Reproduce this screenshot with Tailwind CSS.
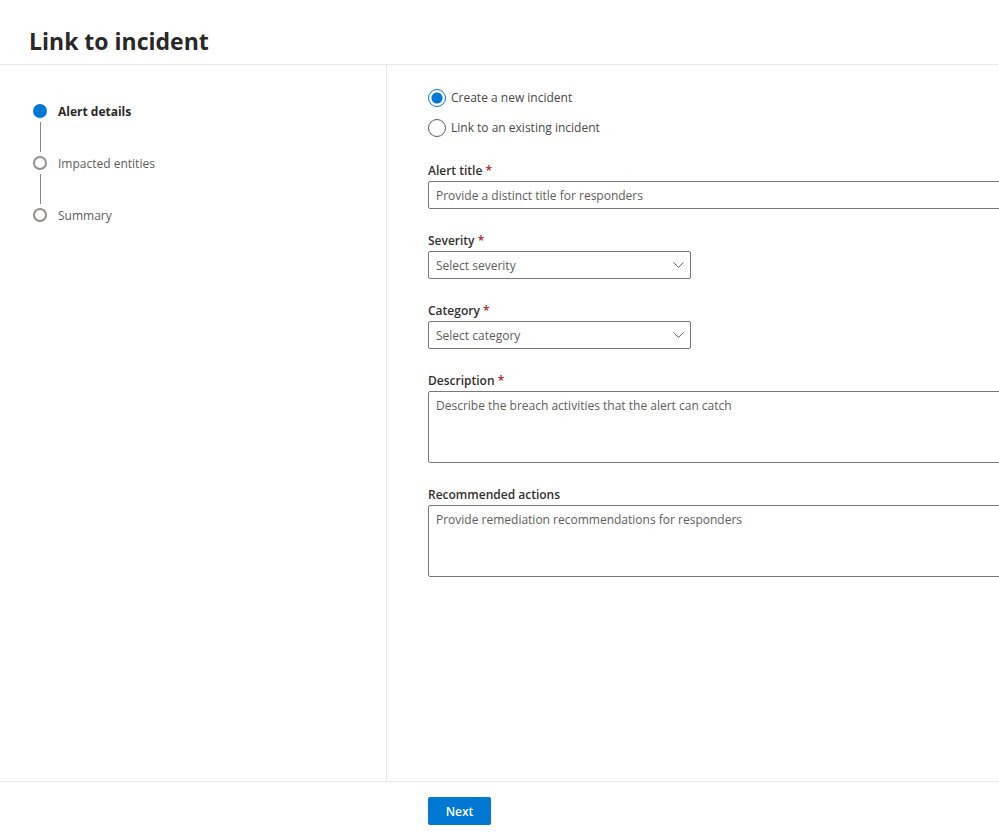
<!DOCTYPE html>
<html lang="en">
  <head>
    <meta charset="UTF-8" />
    <title>Link to incident</title>
    <meta name="viewport" content="width=device-width, initial-scale=1.0" />
    <script src="https://cdn.jsdelivr.net/npm/@tailwindcss/browser@4"></script>
  </head>
  <body
    class="flex h-screen flex-col overflow-hidden bg-white font-['Segoe_UI','Open_Sans','Noto_Sans',sans-serif] text-[12px] leading-5 text-[#4a4846]"
  >
    <header class="flex h-[65px] shrink-0 items-end border-b border-[#eaeaea] px-[29px] pb-[7px]">
      <h1 class="text-[23px] leading-8 font-bold text-[#292827]">Link to incident</h1>
    </header>

    <div class="flex min-h-0 flex-1">
      <!-- Wizard steps -->
      <nav class="w-[387px] shrink-0 border-r border-[#eaeaea] pt-[37px] pl-[33px]" aria-label="Steps">
        <ol>
          <li class="flex gap-[11px]">
            <div class="flex flex-col items-center gap-1 pt-[2px] pb-[2px]">
              <span class="size-[14px] rounded-full bg-[#0078d4]"></span>
              <span class="h-[30px] w-px bg-[#8a8886]"></span>
            </div>
            <span class="font-bold text-[#292827]" aria-current="step">Alert details</span>
          </li>
          <li class="flex gap-[11px]">
            <div class="flex flex-col items-center gap-1 pt-[2px] pb-[2px]">
              <span class="size-[14px] rounded-full border-2 border-[#949290]"></span>
              <span class="h-[30px] w-px bg-[#8a8886]"></span>
            </div>
            <span class="text-[#605e5c]">Impacted entities</span>
          </li>
          <li class="flex gap-[11px]">
            <div class="pt-[2px]">
              <span class="block size-[14px] rounded-full border-2 border-[#949290]"></span>
            </div>
            <span class="text-[#605e5c]">Summary</span>
          </li>
        </ol>
      </nav>

      <!-- Alert details form -->
      <main class="min-w-0 flex-1 overflow-hidden pt-[23px] pl-[41px]">
        <form id="alert-form" class="flex w-full min-w-[640px] flex-col gap-[22px]">
          <fieldset class="flex flex-col gap-[10px] pb-px">
            <label class="flex items-center gap-[5px]">
              <input
                type="radio"
                name="mode"
                checked
                class="size-[18px] appearance-none rounded-full border border-[#605e5c] checked:border-[#0078d4] checked:bg-[radial-gradient(circle,#0078d4_5px,transparent_6px)]"
              />
              Create a new incident
            </label>
            <label class="flex items-center gap-[5px]">
              <input
                type="radio"
                name="mode"
                class="size-[18px] appearance-none rounded-full border border-[#605e5c] checked:border-[#0078d4] checked:bg-[radial-gradient(circle,#0078d4_5px,transparent_6px)]"
              />
              Link to an existing incident
            </label>
          </fieldset>

          <div>
            <label for="title" class="block h-5 font-semibold text-[#323130]"
              >Alert title <span class="text-[#a4262c]">*</span></label
            >
            <input
              id="title"
              type="text"
              placeholder="Provide a distinct title for responders"
              class="block h-7 w-full rounded-xs border border-[#7a7876] px-[7px] placeholder:text-[#605e5c]"
            />
          </div>

          <div>
            <label for="severity" class="block h-5 font-semibold text-[#323130]"
              >Severity <span class="text-[#a4262c]">*</span></label
            >
            <div class="relative w-[263px]">
              <select
                id="severity"
                class="block h-7 w-full appearance-none rounded-xs border border-[#7a7876] px-[7px] pt-[2px] text-[#605e5c]"
              >
                <option>Select severity</option>
              </select>
              <svg class="pointer-events-none absolute top-[11px] right-[7px] h-[6px] w-[11px]" viewBox="0 0 11 6" fill="none" stroke="#605e5c">
                <path d="M.5.4 5.5 5.4 10.5.4" />
              </svg>
            </div>
          </div>

          <div>
            <label for="category" class="block h-5 font-semibold text-[#323130]"
              >Category <span class="text-[#a4262c]">*</span></label
            >
            <div class="relative w-[263px]">
              <select
                id="category"
                class="block h-7 w-full appearance-none rounded-xs border border-[#7a7876] px-[7px] pt-[2px] text-[#605e5c]"
              >
                <option>Select category</option>
              </select>
              <svg class="pointer-events-none absolute top-[11px] right-[7px] h-[6px] w-[11px]" viewBox="0 0 11 6" fill="none" stroke="#605e5c">
                <path d="M.5.4 5.5 5.4 10.5.4" />
              </svg>
            </div>
          </div>

          <div>
            <label for="description" class="block h-5 font-semibold text-[#323130]"
              >Description <span class="text-[#a4262c]">*</span></label
            >
            <textarea
              id="description"
              placeholder="Describe the breach activities that the alert can catch"
              class="block h-[72px] w-full resize-none rounded-xs border border-[#7a7876] px-[7px] py-1 placeholder:text-[#605e5c]"
            ></textarea>
          </div>

          <div>
            <label for="actions" class="block h-5 font-semibold text-[#323130]">Recommended actions</label>
            <textarea
              id="actions"
              placeholder="Provide remediation recommendations for responders"
              class="block h-[72px] w-full resize-none rounded-xs border border-[#7a7876] px-[7px] py-1 placeholder:text-[#605e5c]"
            ></textarea>
          </div>
        </form>
      </main>
    </div>

    <footer class="h-[54px] shrink-0 border-t border-[#eaeaea] pt-[15px] pl-[428px]">
      <button
        type="submit"
        form="alert-form"
        class="block h-7 w-[63px] rounded-xs bg-[#0078d4] pt-[2px] font-semibold text-white"
      >
        Next
      </button>
    </footer>
  </body>
</html>
